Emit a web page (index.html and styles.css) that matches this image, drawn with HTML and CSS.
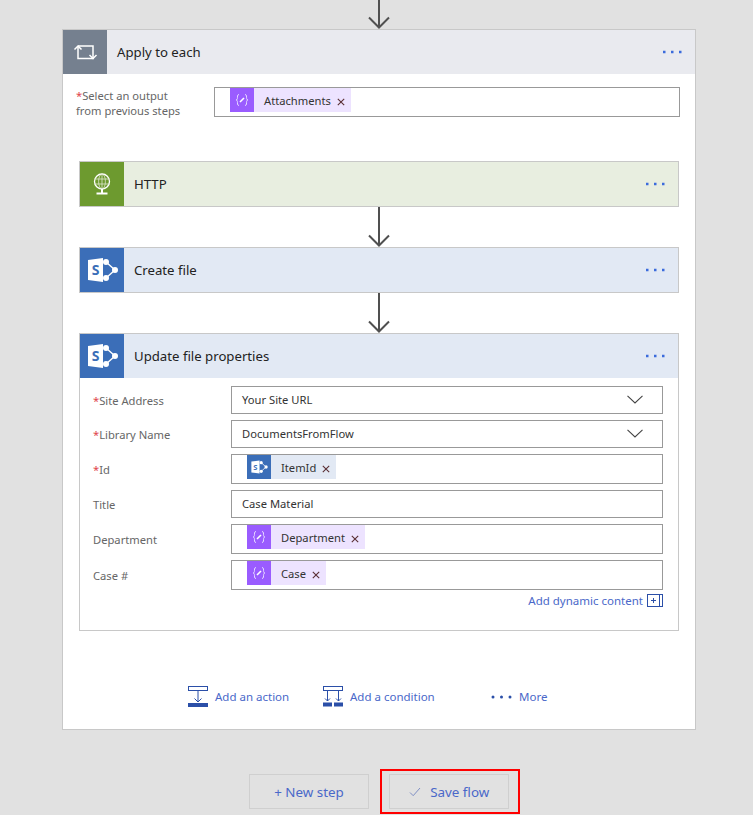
FILE: index.html
```html
<!DOCTYPE html>
<html lang="en">
<head>
    <meta charset="UTF-8">
    <meta name="viewport" content="width=device-width, initial-scale=1.0">
    <title>Edit flow</title>
    <link rel="stylesheet" href="styles.css">
</head>
<body>
    <svg class="defs" width="0" height="0">
        <symbol id="icon-sharepoint" viewBox="0 0 44 44">
            <path d="M26 14 L35 22 L26 30" fill="none" stroke="#fff" stroke-width="1.4"/>
            <circle cx="26" cy="14" r="3" fill="#fff"/>
            <circle cx="35" cy="22" r="3" fill="#fff"/>
            <circle cx="26" cy="30" r="3" fill="#fff"/>
            <path d="M8 12 L23 10 V34 L8 32 Z" fill="#fff"/>
        </symbol>
        <symbol id="icon-variable" viewBox="0 0 24 24">
            <path d="M9 6.5 C7 6.5 7.6 9 7.4 10.5 C7.3 11.5 6.8 12 6 12 C6.8 12 7.3 12.5 7.4 13.5 C7.6 15 7 17.5 9 17.5" fill="none" stroke="#e6d8ff" stroke-width="1"/>
            <path d="M15 6.5 C17 6.5 16.4 9 16.6 10.5 C16.7 11.5 17.2 12 18 12 C17.2 12 16.7 12.5 16.6 13.5 C16.4 15 17 17.5 15 17.5" fill="none" stroke="#e6d8ff" stroke-width="1"/>
            <path d="M10 14 L14 10" stroke="#fff" stroke-width="1.6"/>
        </symbol>
        <symbol id="icon-arrow" viewBox="0 0 22 40" preserveAspectRatio="xMidYMax slice">
            <path d="M11 0 V39 M1 28.5 L11 38.5 L21 28.5" fill="none" stroke="#505050" stroke-width="2"/>
        </symbol>
        <symbol id="icon-dots" viewBox="0 0 22 4">
            <rect x="1" y="0.75" width="2.5" height="2.5" fill="#3b6bdc"/>
            <rect x="9" y="0.75" width="2.5" height="2.5" fill="#3b6bdc"/>
            <rect x="17" y="0.75" width="2.5" height="2.5" fill="#3b6bdc"/>
        </symbol>
        <symbol id="icon-close" viewBox="0 0 8 8">
            <path d="M0.8 0.8 L7.2 7.2 M7.2 0.8 L0.8 7.2" fill="none" stroke="#5a2f34" stroke-width="1.1"/>
        </symbol>
    </svg>

    <svg class="arrow arrow-top"><use href="#icon-arrow"/></svg>

    <div class="card card-loop">
        <div class="card-head head-loop">
            <div class="card-icon icon-loop">
                <svg width="44" height="44" viewBox="0 0 44 44">
                    <path d="M15 16 V28.5 H30 V16 H15" fill="none" stroke="#fff" stroke-width="1.5"/>
                    <path d="M11.5 19.5 L15 16 L18.5 19.5" fill="none" stroke="#fff" stroke-width="1.5"/>
                    <path d="M26.5 25 L30 28.5 L33.5 25" fill="none" stroke="#fff" stroke-width="1.5"/>
                </svg>
            </div>
            <div class="card-title">Apply to each</div>
            <svg class="dots"><use href="#icon-dots"/></svg>
        </div>

        <div class="loop-select">
            <div class="loop-label"><span class="req">*</span>Select an output<br>from previous steps</div>
            <div class="box box-chips box-loop">
                <span class="chip chip-var">
                    <svg class="chip-icon" width="24" height="24"><use href="#icon-variable"/></svg>
                    <span class="chip-text">Attachments</span>
                    <svg class="chip-x" width="8" height="8"><use href="#icon-close"/></svg>
                </span>
            </div>
        </div>

        <div class="steps">
            <div class="card">
                <div class="card-head head-http">
                    <div class="card-icon icon-http">
                        <svg width="44" height="44" viewBox="0 0 44 44">
                            <circle cx="22" cy="19.5" r="7.5" fill="none" stroke="#fff" stroke-width="1.3"/>
                            <ellipse cx="22" cy="19.5" rx="3.4" ry="7.5" fill="none" stroke="#dfe8cf" stroke-width="0.8"/>
                            <path d="M14.5 17 H29.5 M14.5 22 H29.5 M22 12 V27" stroke="#dfe8cf" stroke-width="0.8"/>
                            <path d="M22 27 V31" stroke="#fff" stroke-width="2"/>
                            <path d="M16.5 31.5 H27.5" stroke="#fff" stroke-width="2"/>
                        </svg>
                    </div>
                    <div class="card-title">HTTP</div>
                    <svg class="dots"><use href="#icon-dots"/></svg>
                </div>
            </div>

            <svg class="arrow"><use href="#icon-arrow"/></svg>

            <div class="card">
                <div class="card-head head-sp">
                    <div class="card-icon icon-sp">
                        <svg width="44" height="44" viewBox="0 0 44 44">
                            <use href="#icon-sharepoint"/>
                            <text x="15.5" y="27" class="sp-letter" text-anchor="middle">S</text>
                        </svg>
                    </div>
                    <div class="card-title">Create file</div>
                    <svg class="dots"><use href="#icon-dots"/></svg>
                </div>
            </div>

            <svg class="arrow"><use href="#icon-arrow"/></svg>

            <div class="card">
                <div class="card-head head-sp">
                    <div class="card-icon icon-sp">
                        <svg width="44" height="44" viewBox="0 0 44 44">
                            <use href="#icon-sharepoint"/>
                            <text x="15.5" y="27" class="sp-letter" text-anchor="middle">S</text>
                        </svg>
                    </div>
                    <div class="card-title">Update file properties</div>
                    <svg class="dots"><use href="#icon-dots"/></svg>
                </div>
                <div class="fields">
                    <div class="field">
                        <div class="field-label"><span class="req">*</span>Site Address</div>
                        <div class="box box-select">
                            <span>Your Site URL</span>
                            <svg class="chevron" width="16" height="9" viewBox="0 0 16 9"><path d="M0.5 0.8 L8 8 L15.5 0.8" fill="none" stroke="#444" stroke-width="1.1"/></svg>
                        </div>
                    </div>
                    <div class="field">
                        <div class="field-label"><span class="req">*</span>Library Name</div>
                        <div class="box box-select">
                            <span>DocumentsFromFlow</span>
                            <svg class="chevron" width="16" height="9" viewBox="0 0 16 9"><path d="M0.5 0.8 L8 8 L15.5 0.8" fill="none" stroke="#444" stroke-width="1.1"/></svg>
                        </div>
                    </div>
                    <div class="field">
                        <div class="field-label"><span class="req">*</span>Id</div>
                        <div class="box box-chips">
                            <span class="chip chip-sp">
                                <span class="chip-icon">
                                    <svg width="24" height="24" viewBox="0 0 44 44">
                                        <use href="#icon-sharepoint"/>
                                        <text x="15.5" y="27" class="sp-letter" text-anchor="middle">S</text>
                                    </svg>
                                </span>
                                <span class="chip-text">ItemId</span>
                                <svg class="chip-x" width="8" height="8"><use href="#icon-close"/></svg>
                            </span>
                        </div>
                    </div>
                    <div class="field">
                        <div class="field-label">Title</div>
                        <div class="box box-select"><span>Case Material</span></div>
                    </div>
                    <div class="field">
                        <div class="field-label">Department</div>
                        <div class="box box-chips">
                            <span class="chip chip-var">
                                <svg class="chip-icon" width="24" height="24"><use href="#icon-variable"/></svg>
                                <span class="chip-text">Department</span>
                                <svg class="chip-x" width="8" height="8"><use href="#icon-close"/></svg>
                            </span>
                        </div>
                    </div>
                    <div class="field">
                        <div class="field-label">Case #</div>
                        <div class="box box-chips">
                            <span class="chip chip-var">
                                <svg class="chip-icon" width="24" height="24"><use href="#icon-variable"/></svg>
                                <span class="chip-text">Case</span>
                                <svg class="chip-x" width="8" height="8"><use href="#icon-close"/></svg>
                            </span>
                        </div>
                    </div>
                    <div class="dynamic">
                        <span>Add dynamic content</span>
                        <svg width="16" height="13" viewBox="0 0 16 13">
                            <rect x="0.5" y="0.5" width="15" height="12" fill="none" stroke="#2b4fa8"/>
                            <path d="M12.5 0.5 V12.5" stroke="#2b4fa8"/>
                            <path d="M4 6.5 H9 M6.5 4 V9" stroke="#2b4fa8"/>
                        </svg>
                    </div>
                </div>
            </div>
        </div>

        <div class="actions">
            <div class="action action-add">
                <svg width="20" height="21" viewBox="0 0 20 21">
                    <rect x="0.5" y="0.5" width="19" height="4" fill="#fff" stroke="#2b4fa8"/>
                    <path d="M10 5 V16 M6.5 12.5 L10 16 L13.5 12.5" fill="none" stroke="#2b4fa8"/>
                    <rect x="0" y="17" width="20" height="4" fill="#2b4fa8"/>
                </svg>
                <span>Add an action</span>
            </div>
            <div class="action action-condition">
                <svg width="20" height="21" viewBox="0 0 20 21">
                    <rect x="0.5" y="0.5" width="19" height="4" fill="#fff" stroke="#2b4fa8"/>
                    <path d="M4.5 5 V15 M2 12.5 L4.5 15 L7 12.5 M15.5 5 V15 M13 12.5 L15.5 15 L18 12.5" fill="none" stroke="#2b4fa8"/>
                    <rect x="0" y="16.5" width="9" height="4" fill="#2b4fa8"/>
                    <rect x="11" y="16.5" width="9" height="4" fill="#2b4fa8"/>
                </svg>
                <span>Add a condition</span>
            </div>
            <div class="action action-more">
                <svg width="21" height="4" viewBox="0 0 21 4">
                    <circle cx="2" cy="2" r="1.5" fill="#2b4fa8"/>
                    <circle cx="10.5" cy="2" r="1.5" fill="#2b4fa8"/>
                    <circle cx="19" cy="2" r="1.5" fill="#2b4fa8"/>
                </svg>
                <span>More</span>
            </div>
        </div>
    </div>

    <div class="footer">
        <button class="btn">+ New step</button>
        <div class="highlight">
            <button class="btn btn-save">
                <svg width="12" height="10" viewBox="0 0 12 10"><path d="M1 5.5 L4.2 8.7 L11 1" fill="none" stroke="#7f8fc4" stroke-width="1"/></svg>
                Save flow
            </button>
        </div>
    </div>
</body>
</html>
```

FILE: styles.css
```css
html, body {
    margin: 0;
    padding: 0;
}

body {
    font-family: "Noto Sans", Arial, sans-serif;
    font-size: 12px;
    background-color: #e1e1e1;
    color: #333;
    height: 815px;
    overflow: hidden;
}

.defs {
    display: block;
    height: 0;
}

.sp-letter {
    font-family: "Noto Sans", Arial, sans-serif;
    font-size: 14px;
    font-weight: 700;
    fill: #3b6eb8;
}

.arrow {
    display: block;
    width: 22px;
    height: 40px;
    margin: 0 auto;
}

.arrow-top {
    height: 29px;
    margin: 0 0 0 368px;
}

.card {
    background-color: #fff;
    border: 1px solid #c8c8c8;
}

.card-loop {
    width: 632px;
    margin-left: 62px;
}

.card-head {
    display: flex;
    align-items: center;
    height: 44px;
}

.head-loop {
    background-color: #e9eaef;
}

.head-http {
    background-color: #e8eee0;
}

.head-sp {
    background-color: #e2e9f4;
}

.card-icon {
    width: 44px;
    height: 44px;
    flex: none;
}

.card-icon svg {
    display: block;
}

.icon-loop {
    background-color: #75808f;
}

.icon-http {
    background-color: #6d9a2f;
}

.icon-sp {
    background-color: #3b6eb8;
}

.card-title {
    flex: 1;
    padding-left: 10px;
    font-size: 13.2px;
    color: #222;
}

.dots {
    width: 22px;
    height: 4px;
    margin-right: 11px;
}

.req {
    color: #e0444a;
}

.loop-select {
    display: flex;
    padding: 13px 15px 0 13px;
}

.loop-label {
    width: 138px;
    flex: none;
    padding-top: 1px;
    line-height: 15px;
    font-size: 11.2px;
    color: #666;
}

.box {
    flex: 1;
    box-sizing: border-box;
    border: 1px solid #999;
    background-color: #fff;
    color: #333;
    font-size: 11.2px;
}

.box-select {
    display: flex;
    align-items: center;
    justify-content: space-between;
    height: 28px;
    padding: 0 19px 2px 10px;
}

.box-chips {
    display: flex;
    align-items: flex-start;
    height: 30px;
    padding-left: 15px;
}

.chip {
    display: flex;
    align-items: center;
    height: 24px;
    padding-right: 6px;
}

.chip-var {
    background-color: #ede3ff;
}

.chip-sp {
    background-color: #e2e9f4;
}

.chip-icon {
    display: block;
    width: 24px;
    height: 24px;
    flex: none;
}

.chip-var .chip-icon {
    background-color: #9a5cff;
}

.chip-sp .chip-icon {
    background-color: #3b6eb8;
}

.chip-icon svg {
    display: block;
}

.chip-text {
    margin-left: 10px;
}

.chip-x {
    margin-left: 6px;
    margin-top: 3px;
}

.steps {
    padding: 43px 16px 0;
}

.fields {
    display: flex;
    flex-direction: column;
    gap: 6px;
    padding: 8px 15px 0 0;
}

.field {
    display: flex;
    align-items: center;
}

.field-label {
    width: 138px;
    flex: none;
    padding-left: 13px;
    font-size: 11.2px;
    color: #666;
}

.dynamic {
    display: flex;
    justify-content: flex-end;
    align-items: center;
    gap: 4px;
    height: 16px;
    margin-top: -4px;
    padding-bottom: 22px;
    font-size: 11.5px;
    color: #4a68c9;
}

.actions {
    display: flex;
    height: 21px;
    margin-top: 55px;
    padding-bottom: 22px;
    padding-left: 125px;
    font-size: 11.5px;
    color: #4a68c9;
}

.action {
    display: flex;
    align-items: center;
    gap: 7px;
}

.action-add {
    width: 135px;
}

.action-condition {
    width: 168px;
}

.footer {
    display: flex;
    align-items: flex-start;
    gap: 11px;
    margin-top: 39px;
    padding-left: 249px;
}

.btn {
    box-sizing: border-box;
    width: 120px;
    height: 35px;
    margin-top: 5px;
    background: none;
    border: 1px solid #cfcfcf;
    font-family: "Noto Sans", Arial, sans-serif;
    font-size: 13.4px;
    color: #4a68c9;
}

.btn-save {
    margin-top: 0;
}

.btn-save svg {
    margin-right: 6px;
}

.highlight {
    border: 2px solid #f00;
    padding: 3px 9px 3px 7px;
    height: 35px;
}
```
